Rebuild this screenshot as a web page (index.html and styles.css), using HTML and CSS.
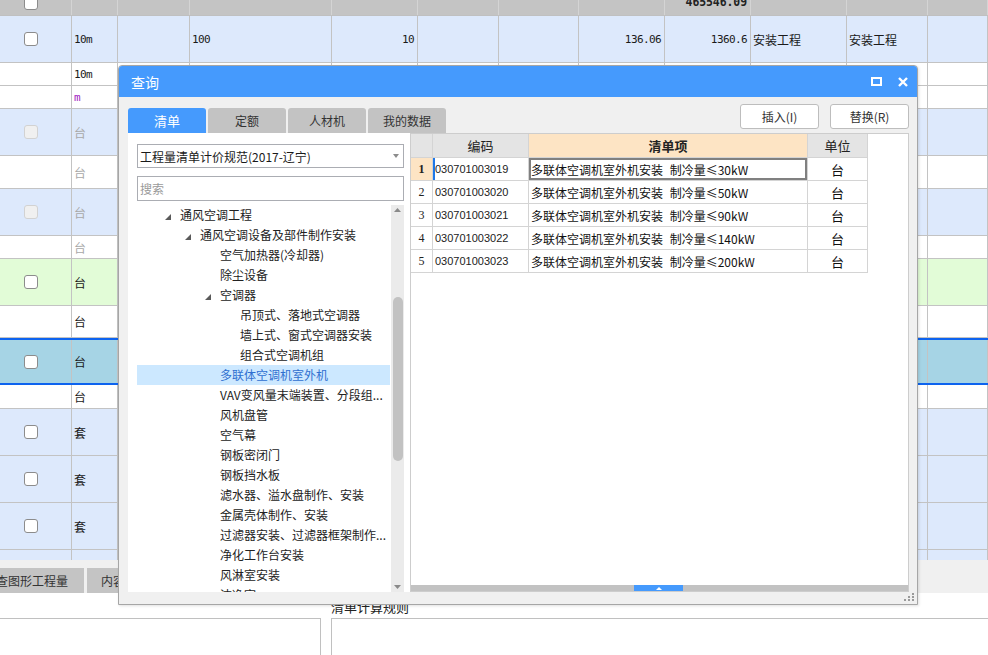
FILE: index.html
```html
<!DOCTYPE html>
<html lang="zh-CN">
<head>
<meta charset="utf-8">
<title>查询</title>
<link rel="stylesheet" href="styles.css">
</head>
<body>
<div class="app">
  <div class="sheet">
    <div class="r h">
      <div><span class="cb"></span></div><div></div><div></div><div></div><div></div><div></div><div></div><div></div>
      <div class="num"><b class="tot">465546.09</b></div><div></div><div></div><div></div>
    </div>
    <div class="r t47 blue">
      <div><span class="cb"></span></div><div class="mono">10m</div><div></div><div class="mono">100</div>
      <div class="num mono">10</div><div></div><div></div><div class="num mono">136.06</div>
      <div class="num mono">1360.6</div><div>安装工程</div><div>安装工程</div><div></div>
    </div>
    <div class="r t23">
      <div></div><div class="mono">10m</div><div></div><div></div><div></div><div></div><div></div><div></div><div></div><div></div><div></div><div></div>
    </div>
    <div class="r t23">
      <div></div><div class="mono purple">m</div><div></div><div></div><div></div><div></div><div></div><div></div><div></div><div></div><div></div><div></div>
    </div>
    <div class="r t47 blue">
      <div><span class="cb dis"></span></div><div class="grey">台</div><div></div><div></div><div></div><div></div><div></div><div></div><div></div><div></div><div></div><div></div>
    </div>
    <div class="r t33">
      <div></div><div class="grey">台</div><div></div><div></div><div></div><div></div><div></div><div></div><div></div><div></div><div></div><div></div>
    </div>
    <div class="r t47 blue">
      <div><span class="cb dis"></span></div><div class="grey">台</div><div></div><div></div><div></div><div></div><div></div><div></div><div></div><div></div><div></div><div></div>
    </div>
    <div class="r t23">
      <div></div><div class="grey">台</div><div></div><div></div><div></div><div></div><div></div><div></div><div></div><div></div><div></div><div></div>
    </div>
    <div class="r t47 green">
      <div><span class="cb"></span></div><div>台</div><div></div><div></div><div></div><div></div><div></div><div></div><div></div><div></div><div></div><div></div>
    </div>
    <div class="r t32">
      <div></div><div>台</div><div></div><div></div><div></div><div></div><div></div><div></div><div></div><div></div><div></div><div></div>
    </div>
    <div class="r t47 sel">
      <div><span class="cb"></span></div><div>台</div><div></div><div></div><div></div><div></div><div></div><div></div><div></div><div></div><div></div><div></div>
    </div>
    <div class="r t24">
      <div></div><div>台</div><div></div><div></div><div></div><div></div><div></div><div></div><div></div><div></div><div></div><div></div>
    </div>
    <div class="r t47 blue">
      <div><span class="cb"></span></div><div>套</div><div></div><div></div><div></div><div></div><div></div><div></div><div></div><div></div><div></div><div></div>
    </div>
    <div class="r t47 blue">
      <div><span class="cb"></span></div><div>套</div><div></div><div></div><div></div><div></div><div></div><div></div><div></div><div></div><div></div><div></div>
    </div>
    <div class="r t47 blue">
      <div><span class="cb"></span></div><div>套</div><div></div><div></div><div></div><div></div><div></div><div></div><div></div><div></div><div></div><div></div>
    </div>
    <div class="r t47 blue">
      <div></div><div></div><div></div><div></div><div></div><div></div><div></div><div></div><div></div><div></div><div></div><div></div>
    </div>
  </div>

  <div class="strip">
    <div class="btab first">查图形工程量</div>
    <div class="btab second">内容</div>
  </div>

  <div class="rules">
    <div class="rl-label">清单计算规则</div>
    <div class="panels">
      <div class="pl"></div>
      <div class="pr"></div>
    </div>
  </div>
</div>

<div class="dlg">
  <div class="dlg-head">
    <span class="dlg-title">查询</span>
    <span class="dlg-icons">
      <svg width="11" height="9" viewBox="0 0 11 9"><rect x="1" y="1" width="9" height="7" fill="none" stroke="#fff" stroke-width="2"/></svg>
      <svg width="10" height="10" viewBox="0 0 10 10"><path d="M1 1L9 9M9 1L1 9" stroke="#fff" stroke-width="2.4" fill="none"/></svg>
    </span>
  </div>
  <div class="dlg-body">
    <div class="lcol">
      <div class="tabs">
        <div class="tab on">清单</div>
        <div class="tab">定额</div>
        <div class="tab">人材机</div>
        <div class="tab">我的数据</div>
      </div>
      <div class="lpanel">
        <div class="select">
          <span>工程量清单计价规范(2017-辽宁)</span>
          <svg width="6" height="4" viewBox="0 0 6 4"><path d="M0 0H6L3 4Z" fill="#8c8c8c"/></svg>
        </div>
        <div class="search">搜索</div>
        <div class="tree">
          <div class="tlist">
            <div class="ti l1"><i class="exp"><svg width="6" height="6" viewBox="0 0 6 6"><path d="M6 0V6H0Z" fill="#5a5a5a"/></svg></i>通风空调工程</div>
            <div class="ti l2"><i class="exp"><svg width="6" height="6" viewBox="0 0 6 6"><path d="M6 0V6H0Z" fill="#5a5a5a"/></svg></i>通风空调设备及部件制作安装</div>
            <div class="ti l3">空气加热器(冷却器)</div>
            <div class="ti l3">除尘设备</div>
            <div class="ti l3"><i class="exp"><svg width="6" height="6" viewBox="0 0 6 6"><path d="M6 0V6H0Z" fill="#5a5a5a"/></svg></i>空调器</div>
            <div class="ti l4">吊顶式、落地式空调器</div>
            <div class="ti l4">墙上式、窗式空调器安装</div>
            <div class="ti l4">组合式空调机组</div>
            <div class="ti l3 act">多联体空调机室外机</div>
            <div class="ti l3">VAV变风量末端装置、分段组...</div>
            <div class="ti l3">风机盘管</div>
            <div class="ti l3">空气幕</div>
            <div class="ti l3">钢板密闭门</div>
            <div class="ti l3">钢板挡水板</div>
            <div class="ti l3">滤水器、溢水盘制作、安装</div>
            <div class="ti l3">金属壳体制作、安装</div>
            <div class="ti l3">过滤器安装、过滤器框架制作...</div>
            <div class="ti l3">净化工作台安装</div>
            <div class="ti l3">风淋室安装</div>
            <div class="ti l3">洁净室</div>
          </div>
          <div class="vscroll">
            <div class="arr"><svg width="7" height="4" viewBox="0 0 7 4"><path d="M0 4H7L3.5 0Z" fill="#8a8a8a"/></svg></div>
            <div class="vthumb"></div>
            <div class="vfill"></div>
            <div class="arr"><svg width="7" height="4" viewBox="0 0 7 4"><path d="M0 0H7L3.5 4Z" fill="#8a8a8a"/></svg></div>
          </div>
        </div>
      </div>
    </div>
    <div class="rcol">
      <div class="btns">
        <div class="btn">插入(I)</div>
        <div class="btn">替换(R)</div>
      </div>
      <div class="grid">
        <div class="gbody">
          <div class="gr gh"><div class="rn"></div><div>编码</div><div class="qh">清单项</div><div>单位</div></div>
          <div class="gr cur"><div class="rn">1</div><div class="code">030701003019</div><div class="item">多联体空调机室外机安装 制冷量≤30kW</div><div class="unit">台</div></div>
          <div class="gr"><div class="rn">2</div><div class="code">030701003020</div><div class="item">多联体空调机室外机安装 制冷量≤50kW</div><div class="unit">台</div></div>
          <div class="gr"><div class="rn">3</div><div class="code">030701003021</div><div class="item">多联体空调机室外机安装 制冷量≤90kW</div><div class="unit">台</div></div>
          <div class="gr"><div class="rn">4</div><div class="code">030701003022</div><div class="item">多联体空调机室外机安装 制冷量≤140kW</div><div class="unit">台</div></div>
          <div class="gr"><div class="rn">5</div><div class="code">030701003023</div><div class="item">多联体空调机室外机安装 制冷量≤200kW</div><div class="unit">台</div></div>
        </div>
        <div class="hscroll">
          <div class="hthumb"><svg width="6" height="3" viewBox="0 0 6 3"><path d="M0 3H6L3 0Z" fill="#fff"/></svg></div>
        </div>
      </div>
    </div>
  </div>
  <div class="grip">
    <svg width="11" height="9" viewBox="0 0 11 9"><g fill="#9a9a9a"><rect x="8" y="0" width="2" height="2"/><rect x="4" y="3" width="2" height="2"/><rect x="8" y="3" width="2" height="2"/><rect x="0" y="6" width="2" height="2"/><rect x="4" y="6" width="2" height="2"/><rect x="8" y="6" width="2" height="2"/></g></svg>
  </div>
</div>
</body>
</html>
```

FILE: styles.css
```css
* { box-sizing: border-box; }
html, body { margin: 0; padding: 0; }
body {
  width: 988px;
  height: 655px;
  overflow: hidden;
  background: #fff;
  font-family: "Noto Sans CJK SC", "Noto Sans", sans-serif;
  color: #1a1a1a;
  position: relative;
}
.app { display: flex; flex-direction: column; height: 655px; }

/* background sheet */
.sheet { height: 560px; overflow: hidden; display: flex; flex-direction: column; flex: none; }
.r {
  display: grid;
  grid-template-columns: 72px 46px 72px 142px 86px 81px 80px 86px 86px 96px 81px 1fr;
  border-bottom: 1px solid #c3c3c3;
  background: #fff;
  flex: none;
}
.r > div {
  border-right: 1px solid #c3c3c3;
  display: flex;
  align-items: center;
  padding: 0 3px 0 2px;
  font-size: 12px;
  white-space: nowrap;
  overflow: hidden;
  color: #1a1a1a;
}
.r > div:first-child { padding-left: 24px; }
.r > div.num { justify-content: flex-end; }
.mono { font-family: "DejaVu Sans Mono", "Liberation Mono", monospace; font-size: 11px !important; letter-spacing: -0.6px; }
.purple { color: #a020c0 !important; }
.grey { color: #a8a8a8 !important; }
.h { height: 16px; background: #c4c4c4; border-bottom-color: #c0c0c0; }
.h > div { border-right-color: #d4d4d4; align-items: flex-start; }
.h .cb { margin-top: -4px; }
.tot { font-family: "DejaVu Sans Mono", monospace; font-size: 11.5px; font-weight: bold; line-height: 12px; margin-top: -4px; letter-spacing: -0.1px; color: #222; }
.t47 { height: 47px; }
.t33 { height: 33px; }
.t32 { height: 32px; }
.t24 { height: 24px; }
.t23 { height: 23px; }
.blue { background: #dde9fc; }
.green { background: #e2fcd7; }
.sel { background: #a6d4e5; border-top: 2px solid #0d63ef; border-bottom: 2px solid #0d63ef; }
.cb {
  display: inline-block;
  width: 14px;
  height: 14px;
  border: 1px solid #8c8c8c;
  border-radius: 3px;
  background: #fff;
}
.cb.dis { border-color: #d2d2d2; background: #f0f0f0; }

/* bottom area */
.strip { height: 33px; background: #f0f0f0; padding-top: 8px; display: flex; gap: 3px; overflow: hidden; flex: none; }
.btab { height: 25px; background: #c4c4c4; font-size: 12px; color: #333; display: flex; align-items: center; flex: none; }
.btab.first { width: 104px; margin-left: -20px; justify-content: center; }
.btab.second { width: 80px; padding-left: 14px; }
.rules { flex: 1; display: flex; flex-direction: column; }
.rl-label { height: 25px; padding-left: 331px; font-size: 13px; line-height: 20px; padding-top: 4px; color: #222; }
.panels { flex: 1; display: flex; gap: 10px; }
.pl { width: 321px; border-top: 1px solid #c0c0c0; border-right: 1px solid #c0c0c0; }
.pr { flex: 1; border-top: 1px solid #c0c0c0; border-left: 1px solid #c0c0c0; }

/* dialog (overlay) */
.dlg {
  position: absolute;
  left: 118px;
  top: 65px;
  width: 800px;
  height: 540px;
  border: 1px solid #a6a6a6;
  border-radius: 4px 4px 0 0;
  background: #f0f0f0;
  display: flex;
  flex-direction: column;
  box-shadow: 1px 1px 3px rgba(0,0,0,0.12);
}
.dlg-head {
  height: 31px;
  background: #459afd;
  border-radius: 3px 3px 0 0;
  display: flex;
  align-items: center;
  justify-content: space-between;
  padding: 0 9px 0 12px;
  flex: none;
}
.dlg-title { color: #fff; font-size: 14px; }
.dlg-icons { display: flex; align-items: center; gap: 16px; }
.dlg-icons svg { display: block; }
.dlg-body { flex: 1; display: flex; padding: 0 8px 12px 9px; min-height: 0; }
.lcol { width: 282px; flex: none; display: flex; flex-direction: column; padding-top: 11px; }
.tabs { display: flex; gap: 2px; height: 25px; flex: none; width: 318px; position: relative; z-index: 1; }
.tab {
  width: 78px;
  flex: none;
  background: #c3c3c3;
  color: #333;
  font-size: 12px;
  border-radius: 3px 3px 0 0;
  display: flex;
  align-items: center;
  justify-content: center;
}
.tab.on { background: #459afd; color: #fff; font-size: 13px; }
.lpanel { flex: 1; background: #fff; padding: 11px 6px 0 9px; display: flex; flex-direction: column; min-height: 0; }
.select {
  height: 24px;
  border: 1px solid #abadb3;
  display: flex;
  align-items: center;
  justify-content: space-between;
  padding: 0 4px 0 2px;
  font-size: 12px;
  color: #1a1a1a;
  flex: none;
}
.search {
  margin-top: 8px;
  height: 25px;
  border: 1px solid #abadb3;
  font-size: 12px;
  color: #9a9a9a;
  padding-left: 2px;
  display: flex;
  align-items: center;
  flex: none;
}
.tree { margin-top: 4px; flex: 1; display: flex; min-height: 0; overflow: hidden; }
.tlist { width: 254px; overflow: hidden; }
.ti {
  height: 20px;
  line-height: 20px;
  font-size: 12px;
  color: #222;
  white-space: nowrap;
  overflow: hidden;
}
.ti.l1 { padding-left: 43px; }
.ti.l2 { padding-left: 63px; }
.ti.l3 { padding-left: 83px; }
.ti.l4 { padding-left: 103px; }
.ti.act { background: #cce8ff; color: #2f6fd0; }
.exp { display: inline-block; width: 6px; margin-left: -15px; margin-right: 9px; vertical-align: 0; }
.exp svg { display: block; }
.vscroll { width: 13px; margin-left: 1px; background: #ebebeb; display: flex; flex-direction: column; align-items: center; }
.arr { height: 10px; display: flex; align-items: center; justify-content: center; flex: none; }
.vthumb { width: 10px; height: 164px; margin-top: 82px; background: #c2c2c2; border-radius: 5px; flex: none; }
.vfill { flex: 1; }

.rcol { flex: 1; display: flex; flex-direction: column; padding-top: 7px; min-width: 0; }
.btns { height: 25px; display: flex; justify-content: flex-end; gap: 11px; margin-bottom: 4px; flex: none; }
.btn {
  width: 79px;
  height: 25px;
  background: #fff;
  border: 1px solid #bdbdbd;
  border-radius: 3px;
  font-size: 12px;
  color: #333;
  display: flex;
  align-items: center;
  justify-content: center;
}
.grid { flex: 1; background: #fff; border: 1px solid #cdcdcd; display: flex; flex-direction: column; min-height: 0; }
.gbody { flex: 1; }
.gr { display: grid; grid-template-columns: 22px 96px 279px 60px; width: 457px; height: 23px; }
.gr > div {
  border-right: 1px solid #d4d4d4;
  border-bottom: 1px solid #d4d4d4;
  display: flex;
  align-items: center;
  white-space: nowrap;
  overflow: hidden;
}
.gh { height: 24px; }
.gh > div { background: #e4e4e4; justify-content: center; font-size: 13px; color: #222; }
.gh > div.qh { background: #fde4c4; font-weight: bold; font-size: 13px; }
.rn { justify-content: center; font-family: "Liberation Serif", serif; font-size: 12px; color: #222; }
.cur .rn { background: #fde4c4; font-weight: bold; }
.code { font-family: "Liberation Sans", Arial, sans-serif; font-size: 11px; padding-left: 2px; color: #222; }
.cur .code { box-shadow: inset 2px 0 0 #1f78e8; }
.item { font-size: 12px; padding-left: 2px; color: #111; word-spacing: 4px; }
.cur .item { box-shadow: inset 0 0 0 2px #808080; }
.unit { justify-content: center; font-size: 13px; color: #111; }
.hscroll { height: 6px; background: #c2c2c2; flex: none; display: flex; }
.hthumb { width: 49px; margin-left: 223px; background: #459afd; display: flex; align-items: center; justify-content: center; }
.hthumb svg { display: block; }
.grip { position: absolute; right: 2px; bottom: 2px; line-height: 0; }
```
